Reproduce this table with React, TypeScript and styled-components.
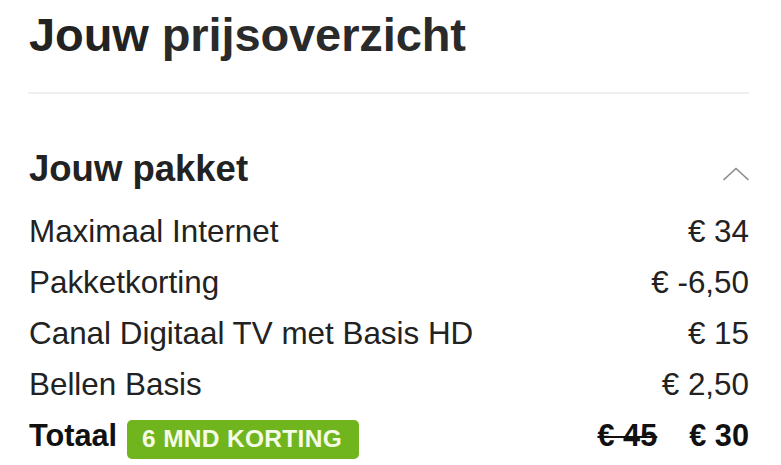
import React from "react";
import styled, { createGlobalStyle } from "styled-components";

const Global = createGlobalStyle`
  html, body { margin: 0; padding: 0; background: #ffffff; }
  body { font-family: "Liberation Sans", Arial, sans-serif; color: #222222; }
`;

const Page = styled.div`
  padding: 12px 32px 0 29px;
  width: 781px;
  box-sizing: border-box;
`;

const Title = styled.h1`
  margin: 0;
  font-size: 47px;
  line-height: 46px;
  font-weight: 700;
  color: #222;
  letter-spacing: -0.1px;
  white-space: nowrap;
`;

const Light = styled.span`
  color: #2a2a2a;
`;

const Divider = styled.hr`
  margin: 34px 0 0 -1px;
  border: 0;
  height: 2px;
  background: #efefef;
`;

const SectionHeader = styled.div`
  margin-top: 57px;
  display: flex;
  justify-content: space-between;
  align-items: center;
  height: 36px;
`;

const SectionTitle = styled.h2`
  margin: 0;
  font-size: 36.5px;
  line-height: 36px;
  font-weight: 700;
  color: #222;
`;

const Chevron = styled.svg`
  margin-top: 11px;
  margin-right: -1px;
  display: block;
`;

const List = styled.div`
  margin-top: 19px;
  display: flex;
  flex-direction: column;
`;

const Row = styled.div<{ $total?: boolean }>`
  display: flex;
  justify-content: space-between;
  align-items: center;
  height: 51px;
  font-size: ${(p) => (p.$total ? "30.7px" : "31.4px")};
  line-height: 51px;
  font-weight: ${(p) => (p.$total ? 700 : 400)};
  color: ${(p) => (p.$total ? "#111" : "#222")};
`;

const Left = styled.div`
  display: flex;
  align-items: center;
  gap: 10px;
`;

const Badge = styled.span`
  display: inline-flex;
  align-items: center;
  height: 39px;
  margin-top: 7px;
  padding: 0 17px 0 15px;
  border-radius: 5px;
  background: #70b51d;
  color: #f4fbe6;
  font-size: 24.5px;
  font-weight: 700;
  line-height: 1;
  letter-spacing: 0.3px;
`;

const Prices = styled.div`
  display: flex;
  align-items: center;
  gap: 32px;
`;

const Old = styled.span`
  text-decoration: line-through;
  text-decoration-thickness: 2px;
`;

const items = [
  { label: "Maximaal Internet", price: "€ 34" },
  { label: "Pakketkorting", price: "€ -6,50" },
  { label: "Canal Digitaal TV met Basis HD", price: "€ 15" },
  { label: "Bellen Basis", price: "€ 2,50" },
];

export default function App() {
  return (
    <Page>
      <Global />
      <Title>
        Jouw <Light>prijsoverzicht</Light>
      </Title>
      <Divider />
      <SectionHeader>
        <SectionTitle>Jouw pakket</SectionTitle>
        <Chevron width="28" height="15" viewBox="0 0 28 15" fill="none">
          <path d="M1.5 13 L14 1.5 L26.5 13" stroke="#8a8a8a" strokeWidth="1.6" />
        </Chevron>
      </SectionHeader>
      <List>
        {items.map((it) => (
          <Row key={it.label}>
            <span>{it.label}</span>
            <span>{it.price}</span>
          </Row>
        ))}
        <Row $total>
          <Left>
            <span>Totaal</span>
            <Badge>6 MND KORTING</Badge>
          </Left>
          <Prices>
            <Old>€ 45</Old>
            <span>€ 30</span>
          </Prices>
        </Row>
      </List>
    </Page>
  );
}
